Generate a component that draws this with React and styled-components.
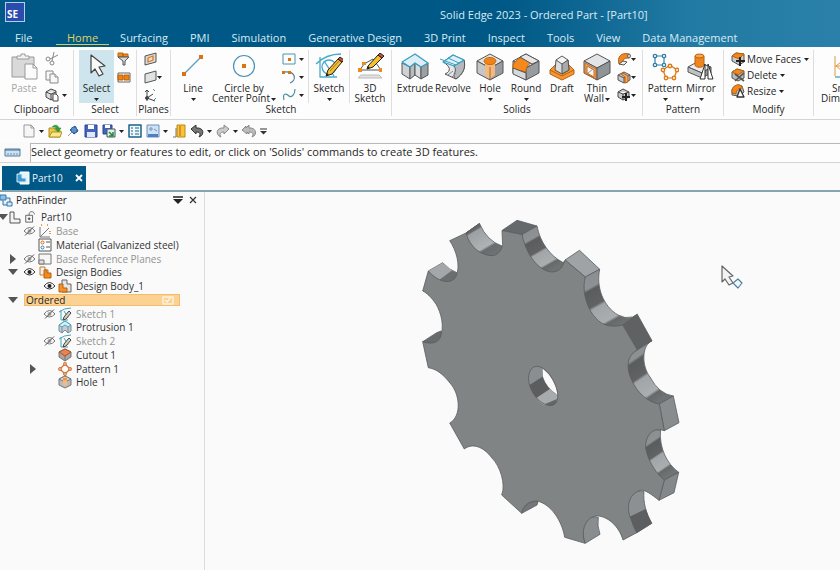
import React, { useState } from "react";
import styled, { createGlobalStyle } from "styled-components";

const tabs = [
  "Home",
  "Surfacing",
  "PMI",
  "Simulation",
  "Generative Design",
  "3D Print",
  "Inspect",
  "Tools",
  "View",
  "Data Management",
];

const treeItems = [
  { id: 1, level: 0, toggle: "open", icon: "part", second: "lock", text: "Part10" },
  { id: 2, level: 1, eye: "off", icon: "axes", text: "Base", dim: true },
  { id: 3, level: 1, icon: "material", text: "Material (Galvanized steel)" },
  { id: 4, level: 1, toggle: "closed", eye: "off", icon: "plane", text: "Base Reference Planes", dim: true },
  { id: 5, level: 1, toggle: "open", eye: "on", icon: "bodies", text: "Design Bodies" },
  { id: 6, level: 2, eye: "on", icon: "body", text: "Design Body_1" },
  { id: 7, level: 1, toggle: "open", text: "Ordered", bar: true },
  { id: 8, level: 2, eye: "off", icon: "sketch", text: "Sketch 1", dim: true },
  { id: 9, level: 2, icon: "protrusion", text: "Protrusion 1" },
  { id: 10, level: 2, eye: "off", icon: "sketch", text: "Sketch 2", dim: true },
  { id: 11, level: 2, icon: "cutout", text: "Cutout 1" },
  { id: 12, level: 2, toggle: "closed", icon: "pattern", text: "Pattern 1" },
  { id: 13, level: 2, icon: "hole", text: "Hole 1" },
];

const Svg = ({ w = 16, h, box, children }) => (
  <svg
    width={w}
    height={h || w}
    viewBox={box || `0 0 ${w} ${h || w}`}
    fill="none"
    stroke="#555"
    strokeLinejoin="round"
    aria-hidden="true"
  >
    {children}
  </svg>
);

const Caret = () => (
  <CaretSvg width="5" height="3" viewBox="0 0 5 3" aria-hidden="true">
    <path d="M0 0h5L2.5 3z" fill="#222" />
  </CaretSvg>
);

const Cube = ({ top = "#e2e4e6", left = "#c4c7ca", right = "#989ca0" }) => (
  <>
    <path d="M14 1 27 8 14 15 1 8z" fill={top} />
    <path d="M1 8 14 15v12L1 20z" fill={left} />
    <path d="M27 8 14 15v12l13-7z" fill={right} />
  </>
);

const SmallPencil = () => (
  <g>
    <path d="M13 17 23 6l4 3-10 12-6 2z" fill="#f6bf2c" stroke="#222" />
    <path d="m23 6 2-2 4 3-2 2z" fill="#d9493a" stroke="#222" />
    <path d="m11 23 1-3 2 2z" fill="#222" stroke="none" />
    <path d="m15 18 9-10" stroke="#a8781a" />
  </g>
);

// Ribbon icons, 28px
const big = {
  paste: (
    <g stroke="#999">
      <path d="M2 4h22v20H2z" fill="#d9d9d9" />
      <path d="M7 6V3h4V1h4v2h4v3z" fill="#f3f3f3" />
      <path d="M15 11h8l4 4v11H15z" fill="#fbfbfb" />
      <path d="M23 11v4h4" />
    </g>
  ),
  select: (
    <path d="M8 2v18l4-4 4 7 4-2-4-7 6-1z" fill="#fafafa" stroke="#444" strokeWidth="1.2" />
  ),
  line: (
    <g>
      <path d="M5 21 22 4" stroke="#5aa0be" strokeWidth="1.3" />
      <path d="M3 19h4v4H3zM20 2h4v4h-4z" fill="#d9740e" stroke="none" />
    </g>
  ),
  circle: (
    <g>
      <circle cx="14" cy="13" r="10.5" stroke="#4b93b4" strokeWidth="1.2" />
      <path d="M12 11h4v4h-4z" fill="#d9740e" stroke="none" />
    </g>
  ),
  sketch: (
    <g>
      <path d="M1 11Q11 1 26 1M5 4v20h17M9 8l10 15" stroke="#45aaca" strokeWidth="1.3" />
      <circle cx="14" cy="14" r="7" stroke="#45aaca" strokeWidth="1.3" />
      <SmallPencil />
    </g>
  ),
  sketch3d: (
    <g>
      <path d="M4 17 8 11 17 6l8 11z" stroke="#555" />
      <path d="M2 15h4v4H2zM6 9h4v3H6zM23 15h3v4h-3z" fill="#ee8a1f" stroke="none" />
      <path d="m5 22 18 0 3 3H2z" fill="#e2e2e2" stroke="#bbb" />
      <path d="M12 13 22 2l4 3-9 9-6 2z" fill="#f6bf2c" stroke="#222" />
      <path d="m22 2 2-2 4 3-2 2z" fill="#d9493a" stroke="#222" />
      <path d="m11 16 1-3 2 2z" fill="#222" stroke="none" />
    </g>
  ),
  extrude: (
    <g>
      <path d="M1 10 9 14v12L1 21z" fill="#cfd2d5" />
      <path d="M9 14 14 10v12l-5 4z" fill="#b9bdc0" />
      <path d="m14 10 6 4v12l-6-4z" fill="#d9dbdd" />
      <path d="m20 14 7-4v12l-7 4z" fill="#9ca0a4" />
      <path d="M1 9 14 1l13 9-7 4-6-4-5 4z" fill="#dfeef4" stroke="#35a0c5" strokeWidth="1.4" />
    </g>
  ),
  revolve: (
    <g>
      <path d="M4 9 14 2l11 5c2 8-1 14-8 19L6 21c7-3 5-8-2-12z" fill="#e4e6e8" />
      <path d="m15 13 10-6c2 8-1 14-8 19-3-2-2-5-1-7 1-3 0-4-1-6z" fill="#b5b9bd" />
      <path d="m9 22 5-4M13 24l4-4" stroke="#888" />
      <path d="M4 9 14 2l11 5-10 6z" fill="#e0f0f6" stroke="#36a2c6" strokeWidth="1.3" />
      <path d="m1 6 16 6M9 5l11 5" stroke="#36a2c6" />
    </g>
  ),
  hole: (
    <g>
      <Cube />
      <path d="M9 7v15l5 4 5-4V7z" fill="#f4b97c" stroke="none" />
      <ellipse cx="14" cy="8" rx="6" ry="3.6" fill="#f08318" stroke="#c96a10" />
      <path d="M14 14v13" stroke="#a66a38" />
    </g>
  ),
  round: (
    <g>
      <Cube />
      <path d="M1 12C3 8 6 6 10 4l11 5c-5 2-7 5-7 10L1 16z" fill="#f48a1c" stroke="#b9620e" />
      <path d="m1 15 13 5v7L1 21z" fill="#d7dadd" />
      <path d="m8 4 6-3 13 7-7 3z" fill="#e6e8ea" />
    </g>
  ),
  draft: (
    <g>
      <path d="M2 17 8 11h12l6 6v4l-12 6-12-6z" fill="#f6962f" stroke="#b9620e" />
      <path d="M8 7 7 17l7 4 7-4-1-10z" fill="#dadcde" />
      <path d="m14 10 6-3 1 10-7 4z" fill="#a7abaf" />
      <path d="m14 3 6 4-6 4-6-4z" fill="#f5f5f5" />
      <path d="m2 17 12 6 12-6" stroke="#b9620e" />
    </g>
  ),
  thin: (
    <g>
      <Cube right="#8f9498" />
      <path d="m2 10 11 6v10L2 20z" fill="#f0ab69" stroke="#c46b1d" />
      <path d="m4 13 7 4v7l-7-4z" fill="#f7f7f7" stroke="#c46b1d" />
      <path d="m5 20 5-4" stroke="#999" />
    </g>
  ),
  pattern: (
    <g>
      <path d="M4 3h9v9H4z" stroke="#3484a8" strokeWidth="1.2" />
      <path d="m19 12 7 5-3 8h-8l-3-8z" stroke="#d9740e" strokeWidth="1.2" />
      <g fill="#fff" stroke="#2f7ea3" strokeWidth="1.3">
        <circle cx="4" cy="3" r="1.7" />
        <circle cx="13" cy="3" r="1.7" />
        <circle cx="4" cy="12" r="1.7" />
        <circle cx="13" cy="12" r="1.7" />
      </g>
      <g fill="#fff" stroke="#e07a12" strokeWidth="1.4">
        <circle cx="19" cy="13" r="1.7" />
        <circle cx="26" cy="17" r="1.7" />
        <circle cx="23" cy="25" r="1.7" />
        <circle cx="15" cy="25" r="1.7" />
        <circle cx="12" cy="17" r="1.7" />
      </g>
    </g>
  ),
  mirror: (
    <g>
      <path d="m1 14 9-5 14 5-9 6z" fill="#eceded" />
      <path d="m1 14 14 6v5L1 19z" fill="#bfc2c5" />
      <path d="m15 20 9-6v6l-9 5z" fill="#96999c" />
      <path d="M8 3v9c0 3 9 3 9 0V3z" fill="#ef851c" stroke="#b9620e" />
      <ellipse cx="12.5" cy="3" rx="4.5" ry="2" fill="#f9a34c" stroke="#b9620e" />
      <path d="m18 11-5 15h5zM21 11l5 15h-5z" fill="#fff" stroke="#333" />
    </g>
  ),
  dimension: (
    <g>
      <path d="M3 3v20M3 13h22" stroke="#e0983f" />
      <path d="m9 9-5 4 5 4" stroke="#e0983f" />
      <path d="M3 24h23" stroke="#6aa9bd" strokeWidth="1.5" />
    </g>
  ),
};

// Ribbon and toolbar icons, 14px
const small = {
  cut: (
    <g stroke="#888">
      <path d="m13 3-8 4M9 0 7 9" />
      <circle cx="3" cy="7" r="2" />
      <circle cx="7" cy="11" r="2" />
    </g>
  ),
  copy: (
    <g stroke="#888" fill="#f7f7f7">
      <path d="M1 1h7v9H1z" />
      <path d="M5 4h5l3 3v6H5z" />
      <path d="M10 4v3h3" />
    </g>
  ),
  copyBody: (
    <g stroke="#444">
      <path d="m6 1 5 2v6l-5 3-5-3V4zM1 4l5 2 5-2M6 6v6" fill="#ddd" />
      <path d="M8 6h3l2 2v5H8z" fill="#fff" />
    </g>
  ),
  filter: (
    <g>
      <path d="M1 1h5v4H1zM6 2h5v3H6z" fill="#f28b1e" stroke="#b9620e" />
      <path d="M1 5h11L8 9v4H6V9z" fill="#d6dadc" stroke="#555" />
    </g>
  ),
  selBox: (
    <g>
      <path d="M1 3h12v9H1z" fill="#fff" stroke="#666" />
      <path d="M1 5h5v5H1zM7 5h5v5H7z" fill="#ee8215" stroke="#b9620e" />
    </g>
  ),
  plane1: (
    <g>
      <path d="M2 4 13 1v9L2 13z" fill="#d8dadc" />
      <path d="m5 6 5-2v4L5 10z" fill="#fbe1c6" stroke="#e0781a" strokeWidth="1.3" />
    </g>
  ),
  plane2: <path d="M2 4 13 1v9L2 13z" fill="#e0e2e4" />,
  coord: (
    <g stroke="#444">
      <path d="M4 13V2M4 10l8 3M4 10l6-4" />
      <path d="m2 4 2-2 2 2" />
      <path d="M10 1l2 2M11 12l2-2" stroke="#3d93a8" />
      <circle cx="4" cy="10" r="1.5" fill="#444" />
    </g>
  ),
  rect: (
    <g>
      <path d="M1 2h12v10H1z" stroke="#4a93b1" />
      <path d="M6 6h3v3H6z" fill="#d9740e" stroke="none" />
    </g>
  ),
  arc: (
    <g>
      <path d="M2 2c12-1 13 8 6 11" stroke="#4a7fa0" strokeWidth="1.2" />
      <path d="M0 1h3v3H0zM6 1h3v3H6z" fill="#d9740e" stroke="none" />
    </g>
  ),
  curve: <path d="M2 12C0 4 5 6 7 8s6-1 6-7" stroke="#4a93a1" strokeWidth="1.2" />,
  sweep: (
    <g>
      <path d="M12 2C4 0 0 5 2 12l4-1C6 7 7 6 12 6z" fill="#f08a20" stroke="#b9620e" />
      <path d="m2 12 5 1 3-3-4-1z" fill="#eee" />
      <ellipse cx="12" cy="4" rx="1.4" ry="2" fill="#eee" />
    </g>
  ),
  rib: (
    <g>
      <path d="m7 2 6 3v5l-6 3-6-3V5z" fill="#c6c9cc" />
      <path d="M1 5l6 3 6-3M7 8v5" />
      <path d="M6 3l5 3v6l-3 1V7L4 4z" fill="#f4a35a" stroke="#b9620e" />
    </g>
  ),
  addBody: (
    <g stroke="#444">
      <path d="m6 1 6 3v5l-6 3-5-3V4zM1 4l5 2 6-2M6 6v6" fill="#ccc" />
      <path d="M9 5v8M5 9h8" strokeWidth="2" stroke="#222" />
    </g>
  ),
  moveFaces: (
    <g>
      <path d="m5 1 8 1v8l-5 3-7-4V4z" fill="#c8cacc" />
      <path d="m1 4 4-3 8 1-5 5z" fill="#f2871a" stroke="#b9620e" />
      <path d="M9 5v9M5 9h9" stroke="#222" strokeWidth="2" />
    </g>
  ),
  deleteFace: (
    <g>
      <path d="m1 4 5-3 7 2v7l-6 3-6-3z" fill="#b9bcbf" />
      <path d="m1 4 5-3 7 2-6 4z" fill="#f2871a" stroke="#b9620e" />
      <path d="m4 6 9 7M13 5 4 13" stroke="#555" strokeWidth="1.6" />
    </g>
  ),
  resize: (
    <g>
      <path d="M1 6C2 2 6 0 11 2l2 6-5 4-7-1z" fill="#c0c3c6" />
      <path d="M1 6C2 2 6 0 9 1l3 3c-5 0-7 3-7 6l-4-1z" fill="#f2871a" stroke="#b9620e" />
      <path d="m9 5 4 8H6z" fill="#fff" stroke="#333" strokeWidth="1.3" />
    </g>
  ),
  newDoc: <path d="M2 1h7l3 3v9H2zM9 1v3h3" fill="#f6f6f6" stroke="#999" />,
  open: (
    <g>
      <path d="M1 4h5l1 2h5v7H1z" fill="#eac64c" stroke="#b08f20" />
      <path d="m1 13 3-5h10l-2 5z" fill="#fbe88d" stroke="#b08f20" />
      <path d="M4 3c3-3 6-2 7 1h2l-3 4-3-4h2" fill="#31a23b" stroke="#1d7d2a" strokeWidth=".5" />
    </g>
  ),
  pin: (
    <g>
      <path d="m2 12 4-4" stroke="#999" />
      <path d="m4 6 5-4 3 5-4 3z" fill="#3f76bb" stroke="#27538d" />
      <circle cx="8" cy="6" r="3" fill="#5b8fce" stroke="#3b68a5" />
    </g>
  ),
  save: (
    <g>
      <path d="M1 1h12v12H1z" fill="#4464bd" stroke="#2b4391" />
      <path d="M4 1h6v4H4z" fill="#fff" stroke="none" />
      <path d="M3 8h8v5H3z" fill="#dfe6f6" stroke="none" />
    </g>
  ),
  saveAs: (
    <g>
      <path d="M1 1h9v9H1z" fill="#4464bd" stroke="#2b4391" />
      <path d="M3 1h5v3H3z" fill="#fff" stroke="none" />
      <path d="M5 5h8v8H5z" fill="#e5eee6" stroke="#456" />
      <path d="m7 8 4 4M11 8v4H7" stroke="#1f8a35" strokeWidth="1.5" />
    </g>
  ),
  list: (
    <g>
      <path d="M1 1h12v12H1z" fill="#eef7fc" stroke="#1d6285" strokeWidth="1.5" />
      <path d="M3 4h2M3 7h2M3 10h2M7 4h4M7 7h4M7 10h4" stroke="#1d6285" />
    </g>
  ),
  view: (
    <g>
      <path d="M1 1h12v12H1z" fill="#cfe2f5" stroke="#6d90b5" />
      <path d="M2 10h10v3H2z" fill="#4d80c0" stroke="none" />
      <path d="M4 4h2v2H4zM8 5l3 2" fill="#fff" stroke="#6d90b5" />
    </g>
  ),
  door: (
    <g>
      <path d="M5 1h8v12H5z" fill="#f5c534" stroke="#b78a12" />
      <path d="M8 2v10" stroke="#e2762d" strokeWidth="1.5" />
      <path d="M1 13h3V4" stroke="#777" />
    </g>
  ),
  undo: (
    <path d="m1 5 5-4v3c8-1 9 7 3 9 2-3 1-5-3-5v2z" fill="#777" stroke="#333" strokeWidth="1" />
  ),
  redo: (
    <path d="M13 5 8 1v3C0 3-1 11 5 13c-2-3-1-5 3-5v2z" fill="#ccc" stroke="#888" strokeWidth="1" />
  ),
  undoAll: (
    <path d="m0 6 4-4v2l3-3v3c7-1 9 7 3 9 2-3 1-5-3-5v2L5 8v2z" fill="#bbb" stroke="#888" strokeWidth="1" />
  ),
};

// PathFinder icons, 14px
const tree = {
  part: <path d="M3 2h4v7h6v4H3z" fill="#f4f4f4" stroke="#555" />,
  lock: (
    <g>
      <path d="M2 5h8v8H2z" fill="#f4f4f4" />
      <path d="M6 5V3c1-3 5-3 6 0v1" />
      <circle cx="6" cy="9" r="1" fill="#555" />
    </g>
  ),
  axes: (
    <g>
      <path d="M2 3v10h10M2 13 11 4" stroke="#777" />
      <path d="M3 1h2M9 1h2M12 7v3" stroke="#e0a04d" strokeDasharray="1 1" strokeWidth="2" />
    </g>
  ),
  material: (
    <g>
      <path d="M1 1h12v12H1z" fill="#fff" stroke="#555" />
      <path d="M8 4h4M8 9h4" />
      <circle cx="4.5" cy="4.5" r="1.5" stroke="#d9600e" />
      <circle cx="4.5" cy="9.5" r="1.5" stroke="#2a85ad" />
    </g>
  ),
  plane: (
    <g>
      <path d="M1 2h12v10H1z" fill="#f7f7f7" stroke="#777" />
      <path d="M1 8h5v4H1z" fill="#ddd" stroke="#777" />
    </g>
  ),
  bodies: (
    <g>
      <path d="M2 2h5v3h3v5H2z" fill="#f2f2f2" stroke="#c97a2b" />
      <path d="M6 5h3v3h4v5H6z" fill="#f28b1e" stroke="#b9620e" />
    </g>
  ),
  body: (
    <g>
      <path d="M4 1h5v4h4v8H4z" fill="#e6e6e6" stroke="#666" />
      <path d="M1 5h4v4h4v4H1z" fill="#f2922d" stroke="#b9620e" />
    </g>
  ),
  sketch: (
    <g>
      <path d="M1 5Q6 1 13 1M3 3v10h7M6 4l4 7" stroke="#43a5bd" />
      <path d="m6 10 5-6 2 2-5 6-3 1z" fill="#d8d0b8" stroke="#444" />
    </g>
  ),
  protrusion: (
    <g>
      <path d="m1 5 6-4 6 4v6l-3 2-3-3-3 3-3-2z" fill="#c2cdd3" stroke="#7a8d96" />
      <path d="m1 5 6-4 6 4-3 2-3-2-3 2z" fill="#d7eef5" stroke="#48a6c0" />
      <path d="M4 7v6M10 7v6" stroke="#7a8d96" />
    </g>
  ),
  cutout: (
    <g>
      <path d="m7 1 6 3v5l-6 4-6-4V4z" fill="#aaa6a2" stroke="#777" />
      <path d="m7 1 6 3-6 4-6-4z" fill="#e98450" stroke="#a55327" />
      <path d="M7 8v5" stroke="#777" />
    </g>
  ),
  pattern: (
    <g fill="#fff" stroke="#d5702c" strokeWidth="1.2">
      <path d="m7 2 5 5-5 5-5-5z" />
      <circle cx="7" cy="2" r="1.3" />
      <circle cx="12" cy="7" r="1.3" />
      <circle cx="7" cy="12" r="1.3" />
      <circle cx="2" cy="7" r="1.3" />
    </g>
  ),
  hole: (
    <g>
      <path d="m7 1 6 3v6l-6 3-6-3V4z" fill="#b9bbbd" stroke="#777" />
      <path d="m7 1 6 3-6 3-6-3z" fill="#e3e3e3" stroke="#777" />
      <path d="M5 4v6l2 1 2-1V4z" fill="#f0bb80" stroke="none" />
      <ellipse cx="7" cy="4" rx="2.5" ry="1.5" fill="#eb9744" stroke="none" />
    </g>
  ),
};

const Eye = ({ off }) => (
  <Svg w={13} h={10} box="0 0 13 10">
    <path d="M1 5q5.5-7 11 0-5.5 6-11 0z" stroke={off ? "#777" : "#333"} />
    <circle cx="6.5" cy="5" r="2" fill={off ? "#aaa" : "#222"} stroke="none" />
    {off && <path d="M2 9.5 11 .5" stroke="#555" />}
  </Svg>
);

const BigButton = ({ icon, lines, width, caret, inline, active, disabled }) => (
  <Big $width={width} $active={active} disabled={disabled}>
    <Svg w={28}>{big[icon]}</Svg>
    <BigText>
      {lines.map((it, i) => (
        <span key={it}>
          {it}
          {inline && i === lines.length - 1 && <Caret />}
        </span>
      ))}
    </BigText>
    {caret && <Caret />}
  </Big>
);

const IconButton = ({ icon, label, caret, tight }) => (
  <Small aria-label={label} $tight={tight}>
    <Svg w={14}>{small[icon]}</Svg>
    {caret && <Caret />}
  </Small>
);

const RibbonGroup = ({ title, width, pad, children }) => (
  <Group $width={width}>
    <GroupBody $pad={pad}>{children}</GroupBody>
    <GroupTitle>{title}</GroupTitle>
  </Group>
);

const Toggle = ({ state, text }) => (
  <ToggleButton aria-label={`Toggle ${text}`}>
    <svg width="10" height="10" viewBox="0 0 10 10" aria-hidden="true">
      <path d={state === "open" ? "M0 2h10L5 8z" : "M2 0v10l6-5z"} fill="#555" />
    </svg>
  </ToggleButton>
);

const TreeRow = ({ item }) => (
  <Row $level={item.level}>
    <Cell $size={item.level === 0 ? 6 : 16}>
      {item.toggle && <Toggle state={item.toggle} text={item.text} />}
    </Cell>
    {item.bar ? (
      <OrderedBar>
        {item.text}
        <Svg w={12} h={9}>
          <path d="M1 1h10v7H1zM3 4l2 2 4-5" stroke="#fff3df" strokeWidth="1.5" />
        </Svg>
      </OrderedBar>
    ) : (
      <>
        {!item.second && <Cell $size={16}>{item.eye && <Eye off={item.eye === "off"} />}</Cell>}
        <Cell $size={16}>
          <Svg w={14}>{tree[item.icon]}</Svg>
        </Cell>
        {item.second && (
          <Cell $size={16}>
            <Svg w={12} box="0 0 14 14">{tree[item.second]}</Svg>
          </Cell>
        )}
        <RowText $dim={item.dim}>{item.text}</RowText>
      </>
    )}
  </Row>
);

// Walls of the notches are painted first, the front face covers their inner side
const Sprocket = () => (
  <svg width="280" height="340" viewBox="410 210 280 340" role="img" aria-label="Sprocket model">
    <defs>
      <linearGradient id="wall" x1="0" y1="0" x2=".5" y2="1">
        <stop offset="0" stopColor="#898c8e" />
        <stop offset=".3" stopColor="#8f9294" />
        <stop offset=".34" stopColor="#5a5c5e" />
        <stop offset=".56" stopColor="#606264" />
        <stop offset=".6" stopColor="#a2a5a8" />
        <stop offset=".84" stopColor="#abaeb0" />
        <stop offset=".88" stopColor="#66696a" />
        <stop offset="1" stopColor="#707374" />
      </linearGradient>
      <linearGradient id="upper" x1="0" y1="0" x2=".6" y2="1">
        <stop offset="0" stopColor="#5c5f61" />
        <stop offset=".24" stopColor="#66696b" />
        <stop offset=".28" stopColor="#9da0a3" />
        <stop offset=".72" stopColor="#b0b3b6" />
        <stop offset=".78" stopColor="#696c6e" />
        <stop offset="1" stopColor="#707375" />
      </linearGradient>
    </defs>
    <g stroke="#595c5e" strokeWidth=".8" strokeLinejoin="round">
      <path d="M466 233 479.500 223.500Q487 241 502 246C501 256 497 259 490 259 475 257 466 243 466 233z" fill="url(#upper)" />
      <path d="M502 230.500 517 220.300 537 226 522 234.500z" fill="#66696b" />
      <path d="M522 234.500 537 226C540 242 550 256 563 262.500L565 261C562 273 557 276 550 275 533 270 522 254 522 234.500z" fill="url(#wall)" />
      <path d="M565 260 579.500 250.300 599.700 269.300 585.300 277z" fill="#a0a3a6" />
      <path d="M585.300 277 599.700 269.300C596 287 603 306 618 315Q625 319 632.700 317L637.300 314.300 622.700 325 615 332C588 335 572 300 585.300 277z" fill="url(#wall)" />
      <path d="M622.700 325 637.300 314.300 652 340.700 637.300 350z" fill="#5f6163" />
      <path d="M637.300 350 652 340.700C642 345 641 365 650 377Q659 394 673.300 396L659.300 404 652 408C636 402 622 382 624 365 625 357 630 353 637.300 350z" fill="url(#wall)" />
      <path d="M659.300 404 673.300 396 679 422.700 664.300 430.700z" fill="#898c8e" />
      <path d="M655 429.500 660.500 430C659 448 667 464 678.700 472.300L664.300 480 658 480C644 466 640 452 642 443 643 436 648 430 655 429.500z" fill="url(#wall)" />
      <path d="M664.300 480 678.700 472.300 674 492.700 659 500.300z" fill="#85888a" />
      <path d="M644 491.700C643 502 646 513 651.700 523.300L636.700 532.700C627 520 624 511 625 503 628 493 637 489 644 491.700z" fill="#8d9092" />
      <path d="M645.500 509.500Q648 517 651.700 523.300L636.700 532.700Q630 525 628 518z" fill="#5c5e60" />
      <path d="M598.300 517.300Q597 526 600 534.300L585.300 543.300C578 527 586 514 598.300 517.300z" fill="#8a8d8f" />
      <path d="M521.700 513.300 537 505 538 501.700C531 500 523 505 521.700 513.300z" fill="#747779" />
      <path d="M422.700 341.700 436.700 332.700 441 331 446 340 434 348z" fill="#686b6d" />
      <path d="M428.300 271 442.700 262.700Q449 270 457 272.700C454 284 449 286 442 285Q434 281 428.300 271z" fill="#6b6e70" />
      <path d="M428.300 271 442.700 262.700 452 270.500 439 280Q433 277 428.300 271z" fill="#a4a7a9" stroke="none" />
    </g>
    <path
      d="M449.700 240.700 466 233 479.500 223.500 466 233C470 248 482 256 493 255.700 500 254 503 247 502.500 243L502 230.500 522 234.500C526 254 538 271 552 272 560 272 563 266 565 260L585.300 277C580 295 592 326 612 326Q618 326.500 622.700 325L637.300 350C624 357 628 373 631.700 380 637 393 648 402 659.300 404L664.300 430.700C651 426 645 438 645.700 448 648 461 655 472 664.300 480L659 500.300C652 495 645 489 640 490.500 628 494 626 509 631 519Q633 526 636.700 532.700L623 540C619 526 607 515 595 516 584 519 581 532 585 543.300L564.700 537.300C562 521 551 504 537 501 528 501 523 506 521.700 513.300L501.700 495C506 484 500 466 492 458 483 446 472 443 464.300 449L449.700 423C462 416 460 394 450 383 442 373 436 369 428.300 367.700L422.700 341.700C432 345 438 342 440 338 445 326 441 313 436 304 431 297 427 293 422.700 291L428.300 271C438 282 450 285 456 277 461 265 456 250 449.700 240.700z"
      fill="#808485"
      stroke="#595c5e"
      strokeWidth=".8"
      strokeLinejoin="round"
    />
    <path d="M536.500 366.300C528 367 526 380 532 391 538 403 550 409 556 403 560 396 557 386 550 375Q543 366 536.500 366.300z" fill="#8b8e90" />
    <path d="M529.500 385 543.500 376Q545 383 550 389L536.500 398Q532 393 529.500 385z" fill="#5b5d5f" />
    <path d="M536.500 398 550 389Q554 394 557.700 395L557 401 544 405Q540 403 536.500 398z" fill="#a8abad" />
    <path d="M545 404 557 399Q556 406 550 406z" fill="#666" />
    <path d="M542.700 368.700Q556 379 557.700 395 546 387 543 377z" fill="#fafafa" />
    <path d="M536.500 366.300C528 367 526 380 532 391 538 403 550 409 556 403 560 396 557 386 550 375Q543 366 536.500 366.300z" fill="none" stroke="#595c5e" strokeWidth=".8" />
  </svg>
);

const App = () => {
  const [current, setCurrent] = useState("Home");

  return (
    <Window>
      <GlobalStyle />
      <Top>
        <TitleBar>
          <Logo>SE</Logo>
          <Title>Solid Edge 2023 - Ordered Part - [Part10]</Title>
        </TitleBar>
        <Menu>
          <FileTab>File</FileTab>
          {tabs.map((it) => (
            <MenuTab key={it} $on={it === current} onClick={() => setCurrent(it)}>
              {it}
            </MenuTab>
          ))}
        </Menu>
      </Top>

      <Ribbon>
        <RibbonGroup title="Clipboard" width={74} pad={6}>
          <BigButton icon="paste" lines={["Paste"]} width={36} disabled />
          <SmallColumn>
            <IconButton icon="cut" label="Cut" />
            <IconButton icon="copy" label="Copy" />
            <IconButton icon="copyBody" label="Copy body" caret />
          </SmallColumn>
        </RibbonGroup>
        <RibbonGroup title="Select" width={63} pad={5}>
          <BigButton icon="select" lines={["Select"]} width={35} caret active />
          <SmallColumn>
            <IconButton icon="filter" label="Selection filter" />
            <IconButton icon="selBox" label="Selection box" />
          </SmallColumn>
        </RibbonGroup>
        <RibbonGroup title="Planes" width={34} pad={3}>
          <SmallColumn>
            <IconButton icon="plane1" label="Coincident plane" />
            <IconButton icon="plane2" label="More planes" caret tight />
            <IconButton icon="coord" label="Coordinate system" />
          </SmallColumn>
        </RibbonGroup>
        <RibbonGroup title="Sketch" width={221} pad={5}>
          <BigButton icon="line" lines={["Line"]} width={34} caret />
          <BigButton icon="circle" lines={["Circle by", "Center Point"]} width={68} inline />
          <SmallColumn $wide>
            <IconButton icon="rect" label="Rectangle" caret />
            <IconButton icon="arc" label="Arc" caret />
            <IconButton icon="curve" label="Curve" caret />
          </SmallColumn>
          <Divider />
          <BigButton icon="sketch" lines={["Sketch"]} width={40} caret />
          <Divider />
          <BigButton icon="sketch3d" lines={["3D", "Sketch"]} width={40} />
        </RibbonGroup>
        <RibbonGroup title="Solids" width={251} pad={4}>
          <BigButton icon="extrude" lines={["Extrude"]} width={38} />
          <BigButton icon="revolve" lines={["Revolve"]} width={38} />
          <BigButton icon="hole" lines={["Hole"]} width={36} caret />
          <BigButton icon="round" lines={["Round"]} width={36} caret />
          <BigButton icon="draft" lines={["Draft"]} width={36} />
          <BigButton icon="thin" lines={["Thin", "Wall"]} width={34} inline />
          <SmallColumn>
            <IconButton icon="sweep" label="Sweep" caret tight />
            <IconButton icon="rib" label="Rib" caret tight />
            <IconButton icon="addBody" label="Add body" caret tight />
          </SmallColumn>
        </RibbonGroup>
        <RibbonGroup title="Pattern" width={81} pad={4}>
          <BigButton icon="pattern" lines={["Pattern"]} width={36} caret />
          <BigButton icon="mirror" lines={["Mirror"]} width={36} caret />
        </RibbonGroup>
        <RibbonGroup title="Modify" width={90} pad={7}>
          <ModifyColumn>
            <ModifyButton>
              <Svg w={14}>{small.moveFaces}</Svg>
              Move Faces
              <Caret />
            </ModifyButton>
            <ModifyButton>
              <Svg w={14}>{small.deleteFace}</Svg>
              Delete
              <Caret />
            </ModifyButton>
            <ModifyButton>
              <Svg w={14}>{small.resize}</Svg>
              Resize
              <Caret />
            </ModifyButton>
          </ModifyColumn>
        </RibbonGroup>
        <RibbonGroup title="" width={66} pad={4}>
          <BigButton icon="dimension" lines={["Smart", "Dimension"]} width={56} />
        </RibbonGroup>
      </Ribbon>

      <QuickBar>
        <IconButton icon="newDoc" label="New" caret />
        <IconButton icon="open" label="Open" />
        <IconButton icon="pin" label="Pin" />
        <IconButton icon="save" label="Save" />
        <IconButton icon="saveAs" label="Save as" caret />
        <IconButton icon="list" label="Properties" />
        <IconButton icon="view" label="View" caret />
        <IconButton icon="door" label="Close part" />
        <IconButton icon="undo" label="Undo" caret />
        <IconButton icon="redo" label="Redo" caret />
        <IconButton icon="undoAll" label="Undo all" />
        <Small aria-label="Customize toolbar">
          <Svg w={7} h={7}>
            <path d="M0 1h7" stroke="#333" />
            <path d="M0 3h7L3.500 6.500z" fill="#333" stroke="none" />
          </Svg>
        </Small>
      </QuickBar>

      <PromptBar>
        <Svg w={17} h={9}>
          <path d="M1 1h15v7H1z" fill="#cfe0ee" stroke="#4f7ba0" />
          <path d="M1 2h15" stroke="#3f6d95" />
          <path d="M3 6h11" stroke="#6f93b3" strokeDasharray="2 1" />
        </Svg>
        <Prompt
          aria-label="Prompt"
          readOnly
          value="Select geometry or features to edit, or click on 'Solids' commands to create 3D features."
        />
      </PromptBar>

      <TabStrip>
        <DocTab>
          <Svg w={14}>
            <path d="M4 1h9v12H4z" fill="#e9f4fa" stroke="#fff" />
            <path d="M1 3h5v4h4v4H1z" fill="#3e9bd1" stroke="#d7eefa" />
          </Svg>
          Part10
          <CloseButton aria-label="Close Part10" $light>
            <Svg w={8}>
              <path d="m1 1 6 6M7 1 1 7" stroke="#fff" strokeWidth="1.8" />
            </Svg>
          </CloseButton>
        </DocTab>
      </TabStrip>

      <Main>
        <Panel>
          <PanelHeader>
            <Svg w={13}>
              <path d="M0 1h6v5H0z" fill="#8fc1e6" stroke="#3176ac" />
              <path d="M3 6v5h4M7 8h5v4H7zM6 4h4v4" fill="#d7eaf7" stroke="#3176ac" />
            </Svg>
            <PanelTitle>PathFinder</PanelTitle>
            <CloseButton aria-label="Panel options">
              <Svg w={10} h={8}>
                <path d="M0 1h10" stroke="#222" strokeWidth="1.5" />
                <path d="M0 3h10L5 8z" fill="#222" stroke="none" />
              </Svg>
            </CloseButton>
            <CloseButton aria-label="Close PathFinder">
              <Svg w={8}>
                <path d="m1 1 6 6M7 1 1 7" stroke="#333" strokeWidth="1.2" />
              </Svg>
            </CloseButton>
          </PanelHeader>
          <Tree>
            {treeItems.map((it) => (
              <TreeRow key={it.id} item={it} />
            ))}
          </Tree>
        </Panel>
        <Canvas>
          <Sprocket />
          <Pointer>
            <Svg w={24} h={26}>
              <path d="M2 1v16l3-3 4 6 4-2-4-6 4-1z" fill="#f2f2f2" stroke="#666" strokeWidth="1.2" />
              <path d="m13 18 5-4 4 4-4 5z" fill="#eef8fc" stroke="#50809f" strokeWidth="1.2" />
            </Svg>
          </Pointer>
        </Canvas>
      </Main>
    </Window>
  );
};

export default App;

const GlobalStyle = createGlobalStyle`
  body {
    margin: 0;
    background: #fafafa;
    font-family: "Open Sans", "Noto Sans", sans-serif;
    font-size: 10px;
    color: #262626;
  }

  button {
    padding: 0;
    border: none;
    background: none;
    color: inherit;
    font: inherit;
    cursor: pointer;
  }
`;

const Window = styled.div`
  display: flex;
  flex-direction: column;
  min-height: 100vh;
  overflow: hidden;
`;

// Header
const Top = styled.header`
  background: linear-gradient(90deg, #005886 0%, #005886 60%, #217aa3 82%, #2a80a8 100%);
  color: #d8ebf5;
`;

const TitleBar = styled.div`
  display: flex;
  align-items: center;
  height: 28px;
  padding-left: 5px;
`;

const Logo = styled.div`
  box-sizing: border-box;
  width: 20px;
  height: 20px;
  margin-bottom: 5px;
  padding-left: 1px;
  border: 1px solid #b8cdea;
  background: #2a4cae;
  color: #fff;
  font-size: 10px;
  font-weight: bold;
  line-height: 22px;
`;

const Title = styled.h1`
  margin: 0 0 0 415px;
  font-size: 11px;
  font-weight: normal;
  white-space: nowrap;
`;

const Menu = styled.nav`
  display: flex;
  height: 19px;
  padding-left: 5px;
`;

const MenuTab = styled.button`
  box-sizing: border-box;
  height: 17px;
  padding: 0 11px;
  border-bottom: 1px solid ${({ $on }) => ($on ? "#d8c94f" : "transparent")};
  color: ${({ $on }) => ($on ? "#e0d35c" : "#d8ebf5")};
  font-size: 11px;
  line-height: 19px;
  white-space: nowrap;
`;

const FileTab = styled(MenuTab)`
  width: 51px;
  padding: 0 13px 0 10px;
  text-align: left;
`;

// Ribbon
const Ribbon = styled.div`
  display: flex;
  height: 72px;
  border-bottom: 1px solid #d4d4d4;
  background: #fdfdfd;
  overflow: hidden;
`;

const Group = styled.section`
  display: flex;
  flex: none;
  flex-direction: column;
  box-sizing: border-box;
  width: ${({ $width }) => $width}px;
  height: 66px;
  margin-top: 3px;
  border-right: 1px solid #dedede;
`;

const GroupBody = styled.div`
  display: flex;
  height: 53px;
  padding-left: ${({ $pad }) => $pad}px;
`;

const GroupTitle = styled.div`
  line-height: 13px;
  text-align: center;
`;

const Big = styled.button`
  display: flex;
  flex: none;
  flex-direction: column;
  align-items: center;
  width: ${({ $width }) => $width}px;
  height: 53px;
  padding-top: 3px;
  background: ${({ $active }) => ($active ? "#cfe5ee" : "none")};

  &:disabled {
    color: #a5a5a5;
  }
`;

const BigText = styled.span`
  display: flex;
  flex-direction: column;
  margin-top: 2px;
  line-height: 10px;
  white-space: nowrap;

  & + svg {
    margin: 5px 0 0;
  }
`;

const CaretSvg = styled.svg`
  flex: none;
  margin-left: 1px;
  vertical-align: middle;
`;

const SmallColumn = styled.div`
  display: flex;
  flex-direction: column;
  gap: 4px;
  padding: 2px ${({ $wide }) => ($wide ? 4 : 3)}px;
`;

const Small = styled.button`
  display: flex;
  align-items: center;
  height: 14px;

  ${CaretSvg} {
    margin-left: ${({ $tight }) => ($tight ? 0 : 3)}px;
  }
`;

const Divider = styled.div`
  width: 1px;
  height: 53px;
  background: #dedede;
`;

const ModifyColumn = styled.div`
  display: flex;
  flex-direction: column;
  gap: 2px;
  padding-top: 2px;
`;

const ModifyButton = styled.button`
  display: flex;
  align-items: center;
  gap: 2px;
  height: 14px;
  white-space: nowrap;
`;

// Bars under the ribbon
const QuickBar = styled.div`
  display: flex;
  align-items: center;
  gap: 4px;
  height: 22px;
  padding-left: 22px;
  background: #fcfcfc;
`;

const PromptBar = styled.div`
  display: flex;
  align-items: center;
  gap: 9px;
  height: 20px;
  padding-left: 4px;
  border-bottom: 1px solid #d4d4d4;
`;

const Prompt = styled.input`
  flex: 1;
  box-sizing: border-box;
  height: 19px;
  padding: 0 0 2px;
  border: 1px solid #b9b9b9;
  border-width: 1px 0 0 1px;
  outline: none;
  background: #fdfdfd;
  color: #262626;
  font: inherit;
  font-size: 11px;
`;

const TabStrip = styled.div`
  display: flex;
  align-items: flex-end;
  height: 27px;
  padding-left: 2px;
  border-bottom: 2px solid #86a5b3;
`;

const DocTab = styled.div`
  display: flex;
  align-items: center;
  gap: 2px;
  box-sizing: border-box;
  width: 84px;
  height: 24px;
  padding: 0 3px 0 14px;
  background: #005886;
  color: #e6f2f8;
`;

const CloseButton = styled.button`
  display: flex;
  align-items: center;
  margin-left: ${({ $light }) => ($light ? "auto" : "6px")};
`;

// PathFinder
const Main = styled.main`
  display: flex;
  flex: 1;
`;

const Panel = styled.aside`
  box-sizing: border-box;
  width: 205px;
  border-right: 1px solid #dcdcdc;
`;

const PanelHeader = styled.div`
  display: flex;
  align-items: center;
  height: 16px;
  padding-right: 7px;
`;

const PanelTitle = styled.h2`
  flex: 1;
  margin: 0 0 0 3px;
  font-size: 10px;
  font-weight: normal;
`;

const Tree = styled.ul`
  margin: 0;
  padding: 2px 0 0;
  list-style: none;
`;

const Row = styled.li`
  display: flex;
  align-items: center;
  height: 14px;
  padding-left: ${({ $level }) => [0, 5, 25][$level]}px;
  white-space: nowrap;

  &:nth-child(4n) {
    height: 13px;
  }
`;

const Cell = styled.span`
  display: flex;
  flex: none;
  justify-content: center;
  width: ${({ $size }) => $size}px;
`;

const ToggleButton = styled.button`
  display: flex;
`;

const RowText = styled.span`
  margin-left: 3px;
  color: ${({ $dim }) => ($dim ? "#929292" : "#333")};
`;

const OrderedBar = styled.div`
  display: flex;
  align-items: center;
  justify-content: space-between;
  box-sizing: border-box;
  width: 156px;
  height: 12px;
  margin-left: 3px;
  padding: 0 5px 0 1px;
  border: 1px solid #f3bd6b;
  background: #fcd292;
`;

const Canvas = styled.section`
  position: relative;
  flex: 1;
  padding: 18px 0 0 205px;
  background: #fafafa;
`;

const Pointer = styled.div`
  position: absolute;
  top: 73px;
  left: 515px;
`;
